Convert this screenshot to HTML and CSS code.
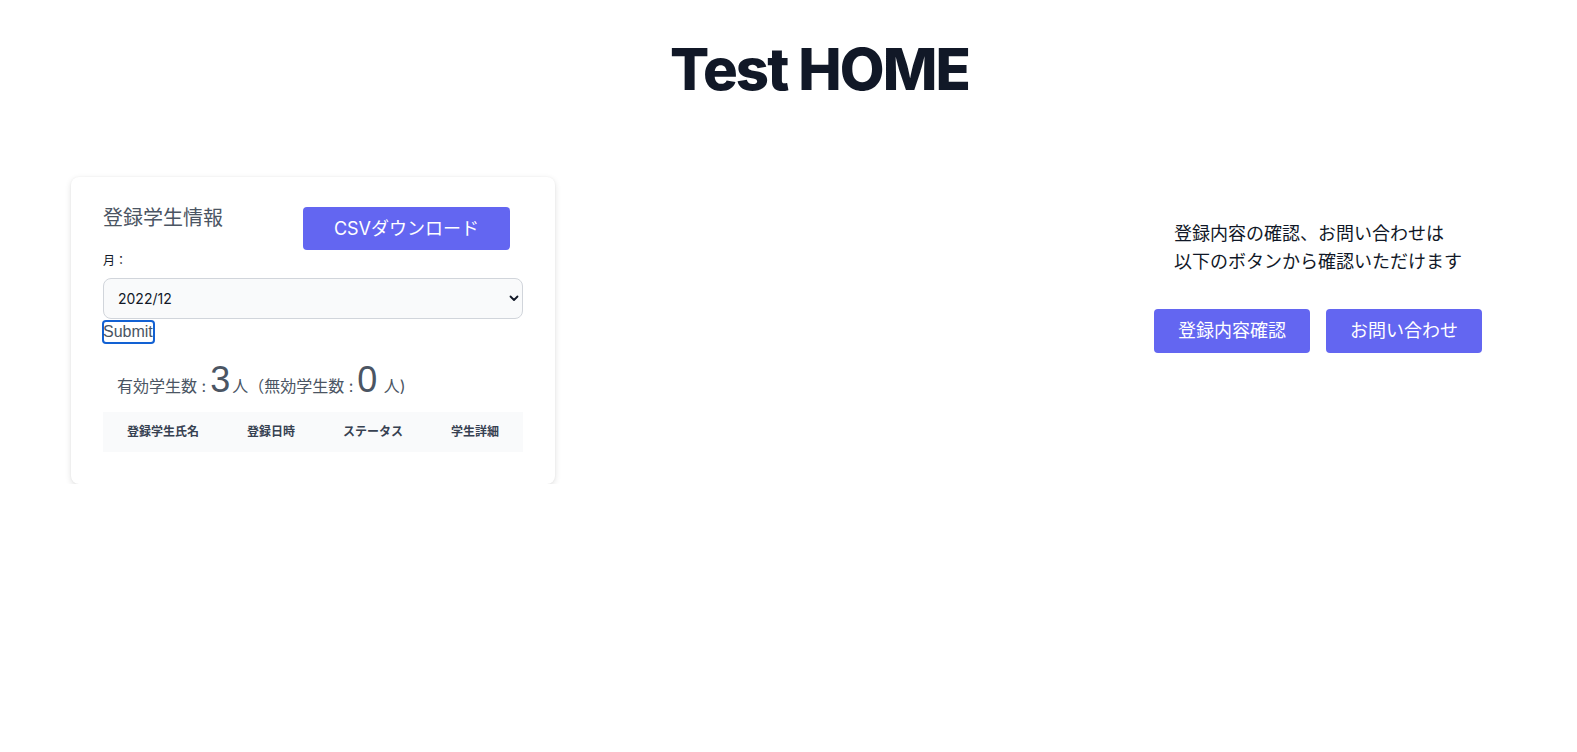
FILE: index.html
```html
<!DOCTYPE html>
<html lang="ja">
<head>
<meta charset="utf-8">
<title>Test HOME</title>
<link rel="stylesheet" href="styles.css">
</head>
<body>
<header class="hero">
  <h1 class="hero-title">Test HOME</h1>
</header>
<main class="main">
  <section class="card">
    <div class="card-head">
      <h2 class="card-title">登録学生情報</h2>
      <button class="btn btn-csv" type="button">CSVダウンロード</button>
    </div>
    <form class="month-form">
      <label class="month-label" for="month">月：</label>
      <div class="select-wrap">
        <select id="month" class="month-select">
          <option>2022/12</option>
        </select>
        <svg class="chev" width="10" height="7" viewBox="0 0 10 7" aria-hidden="true"><path d="M1.5 1.5 L5 5 L8.5 1.5" fill="none" stroke="#111827" stroke-width="1.8" stroke-linecap="round" stroke-linejoin="round"/></svg>
      </div>
      <button type="submit" class="submit">Submit</button>
    </form>
    <p class="count">有効学生数 :<span class="num">3</span>人（無効学生数 :<span class="num">0</span> 人)</p>
    <table class="students">
      <thead>
        <tr><th>登録学生氏名</th><th>登録日時</th><th>ステータス</th><th>学生詳細</th></tr>
      </thead>
    </table>
  </section>
  <aside class="side">
    <p class="side-text">登録内容の確認、お問い合わせは<br>以下のボタンから確認いただけます</p>
    <div class="side-actions">
      <button class="btn btn-side" type="button">登録内容確認</button>
      <button class="btn btn-side" type="button">お問い合わせ</button>
    </div>
  </aside>
</main>
</body>
</html>
```
FILE: styles.css
```css
* { box-sizing: border-box; }
body {
  margin: 0;
  background: #ffffff;
  font-family: "Inter", "Noto Sans CJK JP", sans-serif;
  color: #111827;
}
.hero {
  padding: 39px 0 0 62px;
  text-align: center;
}
.hero-title {
  margin: 0;
  font-size: 58px;
  line-height: 60px;
  font-weight: 800;
  letter-spacing: -1.9px;
  color: #111827;
}
.main {
  margin-top: 78px;
  display: flex;
  justify-content: space-between;
  align-items: flex-start;
  padding: 0 95px 0 71px;
}
.card {
  width: 484px;
  padding: 30px 32px 32px;
  background: #fff;
  border-radius: 8px;
  box-shadow: 0 2px 6px rgba(0,0,0,0.12), 0 0 2px rgba(0,0,0,0.05);
}
.card-head {
  display: flex;
  align-items: flex-start;
  height: 43px;
}
.card-title {
  margin: 0;
  font-size: 20px;
  line-height: 22px;
  font-weight: 400;
  color: #4b5563;
}
.btn {
  background: #6366f1;
  color: #fff;
  border: none;
  border-radius: 4px;
  font-family: "Inter", "Noto Sans CJK JP", sans-serif;
  font-size: 18px;
  cursor: pointer;
}
.btn-csv {
  margin-left: auto;
  margin-right: 13px;
  height: 43px;
  padding: 0 31px;
  line-height: 43px;
}
.month-label {
  display: block;
  font-size: 12px;
  line-height: 16px;
  margin: 3px 0 9px;
  color: #111827;
}
.select-wrap {
  position: relative;
}
.month-select {
  display: block;
  width: 100%;
  height: 41px;
  border: 1px solid #d1d5db;
  border-radius: 8px;
  background: #f9fafb;
  padding: 0 14px;
  font-family: "Inter", sans-serif;
  font-size: 14px;
  color: #111827;
  appearance: none;
  -webkit-appearance: none;
}
.chev {
  position: absolute;
  right: 4px;
  top: 17px;
  pointer-events: none;
}
.submit {
  display: block;
  margin: 1px 0 0 -1px;
  height: 24px;
  padding: 0 2px 0 1px;
  border: none;
  background: transparent;
  font-family: "Liberation Sans", sans-serif;
  font-size: 16px;
  line-height: 24px;
  color: #4b5563;
  box-shadow: inset 0 0 0 2px #1261d3;
  border-radius: 4px;
}
.count {
  margin: 16px 0 6px;
  padding-left: 14px;
  font-size: 16px;
  line-height: 40px;
  color: #4b5563;
  white-space: nowrap;
}
.num {
  font-family: "Liberation Sans", sans-serif;
  font-size: 36px;
  padding: 0 2px 0 4px;
}
.students {
  width: 100%;
  border-collapse: collapse;
}
.students th {
  background: #f9fafb;
  padding: 12px 24px;
  font-size: 12px;
  line-height: 16px;
  font-weight: 700;
  color: #374151;
  text-align: left;
  white-space: nowrap;
}
.side {
  margin-top: 43px;
  width: 328px;
  display: flex;
  flex-direction: column;
  align-items: center;
}
.side-text {
  margin: 0;
  font-size: 18px;
  line-height: 28px;
  color: #111827;
}
.side-actions {
  display: flex;
  gap: 16px;
  margin-top: 33px;
}
.btn-side {
  width: 156px;
  padding: 8px 0;
  line-height: 28px;
}
```
